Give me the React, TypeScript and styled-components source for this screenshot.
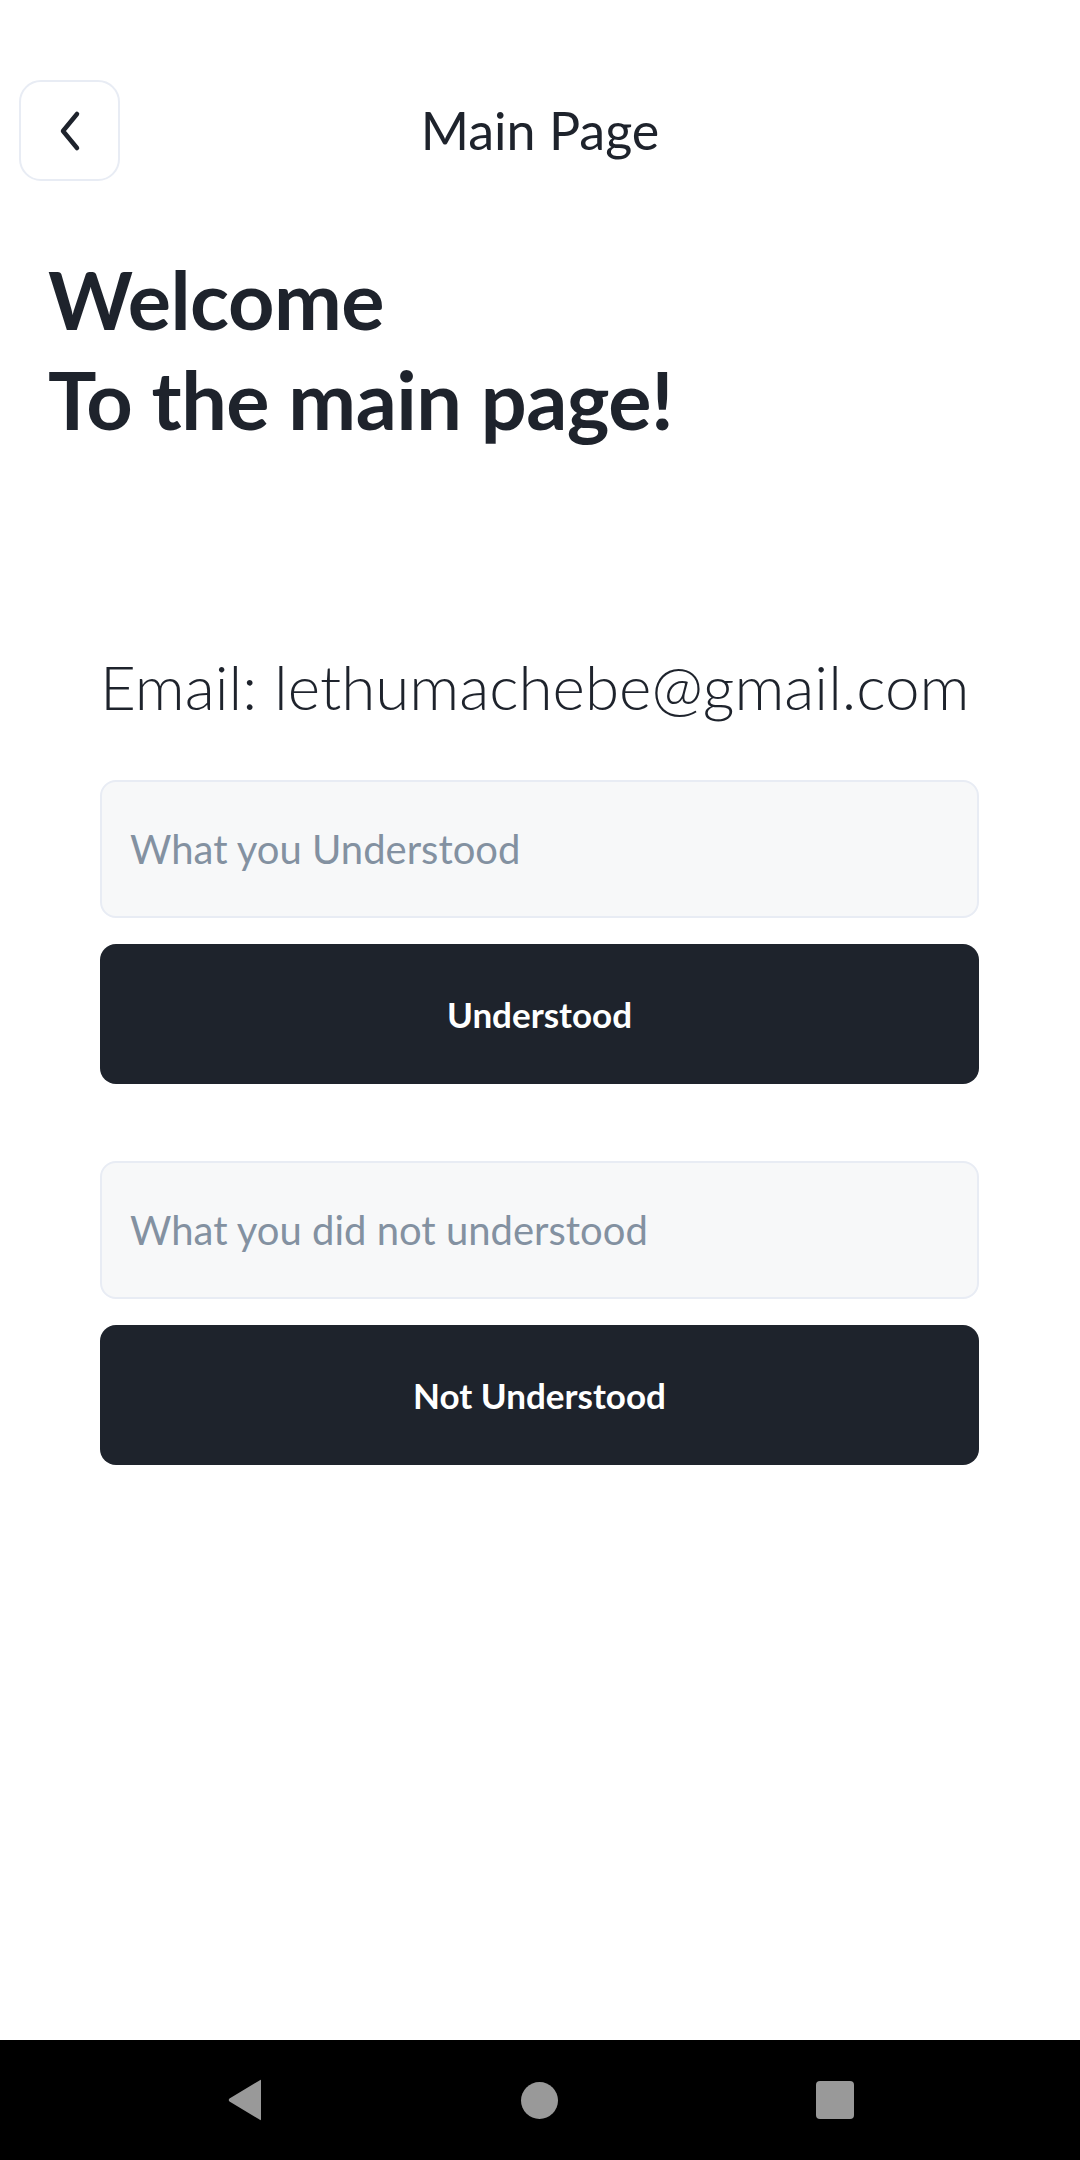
import React from 'react';
import styled, { createGlobalStyle } from 'styled-components';

const GlobalStyle = createGlobalStyle`
  html, body {
    margin: 0;
    padding: 0;
    background: #ffffff;
  }
  body {
    font-family: Lato, 'Noto Sans', sans-serif;
    color: #1e232c;
  }
  * {
    box-sizing: border-box;
  }
`;

type Entry = {
  placeholder: string;
  action: string;
};

const entries: Entry[] = [
  { placeholder: 'What you Understood', action: 'Understood' },
  { placeholder: 'What you did not understood', action: 'Not Understood' },
];

const App: React.FC = () => {
  return (
    <Screen>
      <GlobalStyle />
      <Main>
        {/* Header */}
        <Header>
          <BackButton aria-label="Back">
            <svg width="30" height="42" viewBox="0 0 30 42" fill="none">
              <path
                d="M22 4 L8 21 L22 38"
                stroke="#1e232c"
                strokeWidth="4.5"
                strokeLinecap="round"
                strokeLinejoin="round"
              />
            </svg>
          </BackButton>
          <Title>Main Page</Title>
          <span />
        </Header>

        {/* Welcome */}
        <Heading>
          Welcome
          <br />
          To the main page!
        </Heading>

        {/* Form */}
        <Form>
          <Email>Email: lethumachebe@gmail.com</Email>
          {entries.map((entry) => (
            <Group key={entry.action}>
              <Field placeholder={entry.placeholder} />
              <Action type="button">{entry.action}</Action>
            </Group>
          ))}
        </Form>
      </Main>

      {/* System navigation */}
      <NavBar>
        <svg width="36" height="42" viewBox="0 0 36 42">
          <path
            d="M34 2 L34 40 Q34 42 32.5 40.5 L2.5 22.5 Q1 21 2.5 19.5 L32.5 1.5 Q34 0 34 2 Z"
            fill="#999999"
          />
        </svg>
        <HomeDot />
        <RecentSquare />
      </NavBar>
    </Screen>
  );
};

export default App;

const Screen = styled.div`
  width: 1080px;
  min-height: 2160px;
  display: flex;
  flex-direction: column;
  background: #ffffff;
`;

const Main = styled.main`
  flex: 1;
  display: flex;
  flex-direction: column;
`;

const Header = styled.header`
  display: grid;
  grid-template-columns: 1fr auto 1fr;
  align-items: center;
  padding: 80px 19px 0;
`;

const BackButton = styled.button`
  width: 101px;
  height: 101px;
  border: 2px solid #e8ecf4;
  border-radius: 22px;
  background: #ffffff;
  display: flex;
  align-items: center;
  justify-content: center;
  padding: 0;
`;

const Title = styled.h1`
  margin: 0;
  font-size: 52px;
  font-weight: 400;
  line-height: 1.2;
  color: #1e232c;
`;

const Heading = styled.h2`
  margin: 68px 0 0;
  padding-left: 48px;
  font-size: 81px;
  font-weight: 700;
  line-height: 100px;
  letter-spacing: -0.5px;
  color: #1e232c;
`;

const Form = styled.section`
  display: flex;
  flex-direction: column;
  gap: 77px;
  padding: 0 101px 0 100px;
  margin-top: 200px;
`;

const Email = styled.p`
  margin: 0 0 -21px;
  font-size: 62px;
  font-weight: 300;
  line-height: 75px;
  color: #1e232c;
  white-space: nowrap;
`;

const Group = styled.div`
  display: flex;
  flex-direction: column;
  gap: 26px;
`;

const Field = styled.input`
  height: 138px;
  width: 100%;
  border: 2px solid #e8ecf4;
  border-radius: 16px;
  background: #f7f8f9;
  padding: 0 28px;
  font-family: Lato, 'Noto Sans', sans-serif;
  font-size: 40px;
  color: #1e232c;
  outline: none;

  &::placeholder {
    color: #8391a1;
    font-weight: 400;
  }
`;

const Action = styled.button`
  height: 140px;
  width: 100%;
  border: none;
  border-radius: 16px;
  background: #1e232c;
  color: #ffffff;
  font-family: Lato, 'Noto Sans', sans-serif;
  font-size: 35px;
  font-weight: 700;
`;

const NavBar = styled.nav`
  height: 120px;
  background: #000000;
  display: flex;
  align-items: center;
  justify-content: center;
  gap: 258px;
`;

const HomeDot = styled.span`
  width: 37px;
  height: 37px;
  border-radius: 50%;
  background: #999999;
`;

const RecentSquare = styled.span`
  width: 38px;
  height: 38px;
  border-radius: 4px;
  background: #999999;
`;
